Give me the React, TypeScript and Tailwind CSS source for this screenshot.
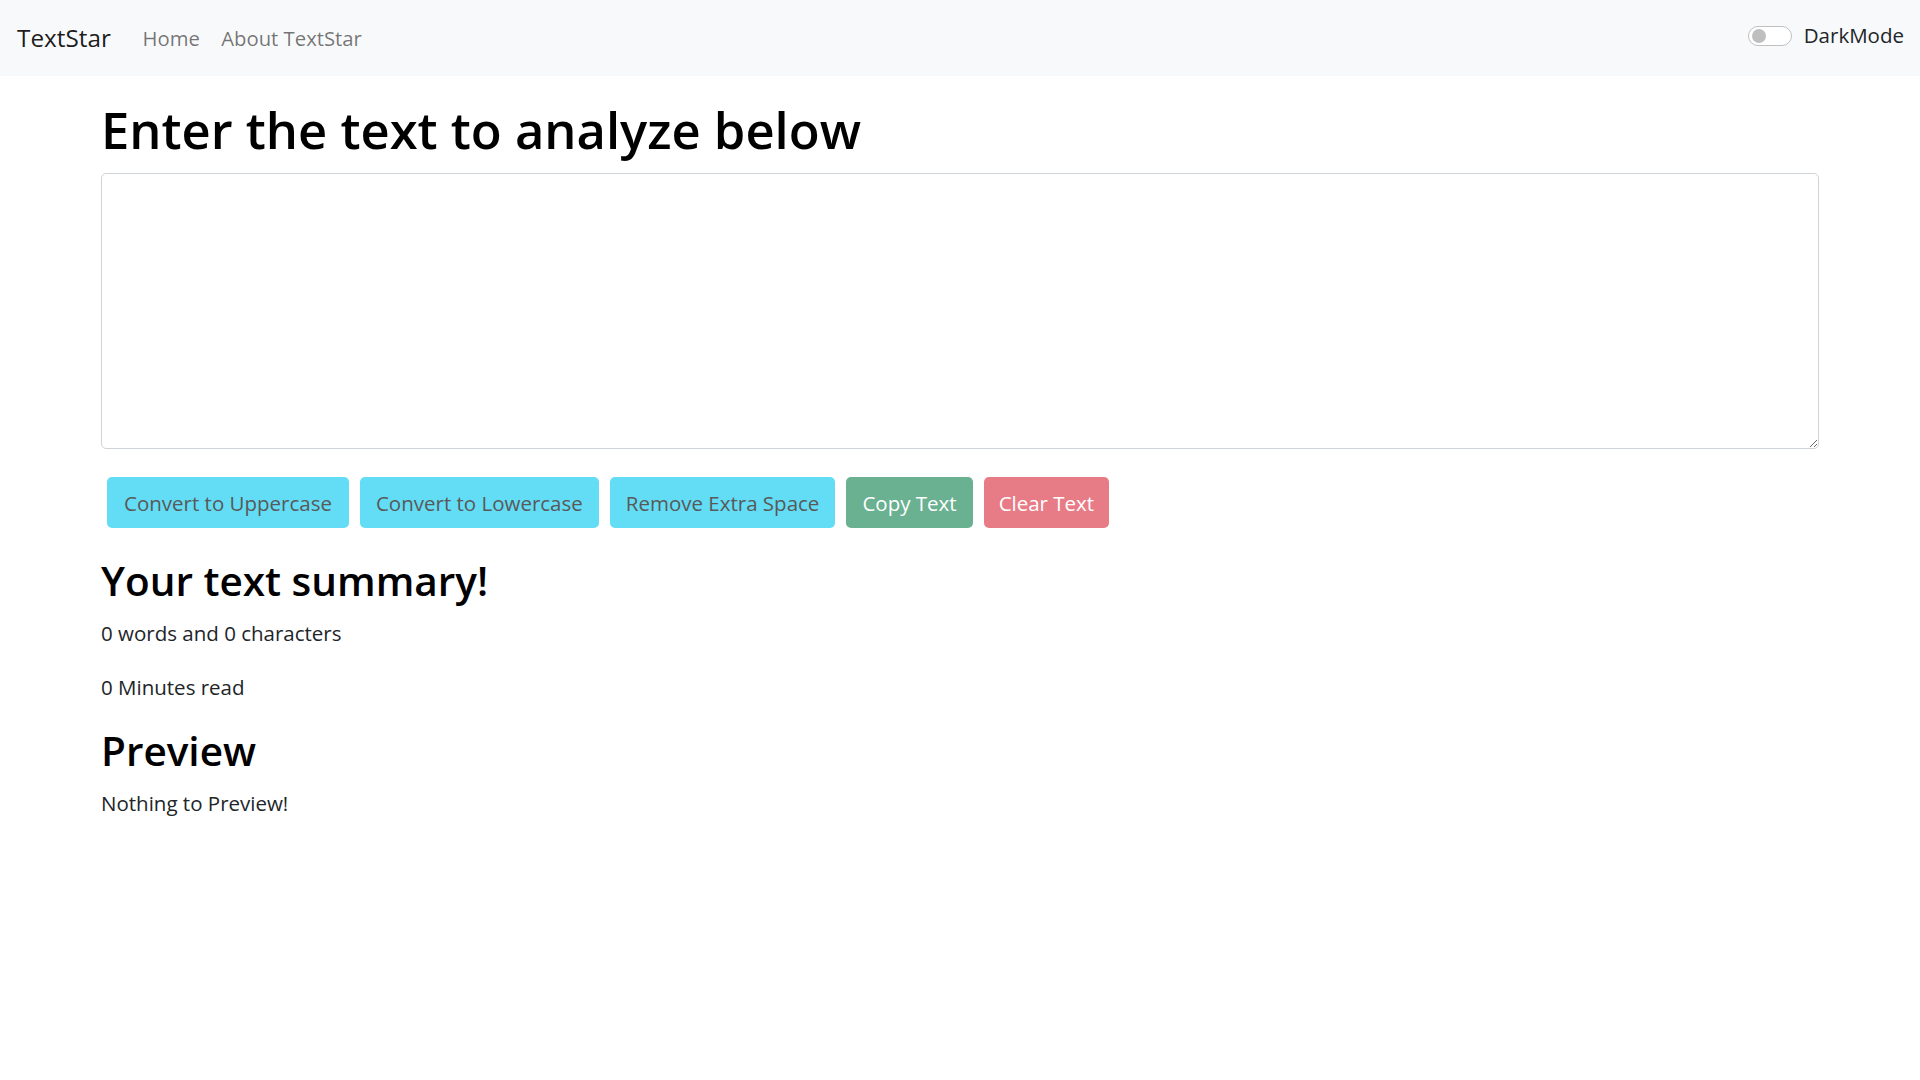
import { useState } from 'react';

const font = { fontFamily: '"Open Sans", "Noto Sans", sans-serif' };

export default function App() {
  const [text, setText] = useState('');
  const words = text.split(/\s+/).filter((w) => w.length > 0).length;
  const empty = text.length === 0;

  return (
    <div className="min-h-screen bg-white text-[#212529]" style={font}>
      {/* navbar */}
      <nav className="h-[76px] bg-[#f8f9fa] flex items-center pl-[17px] pr-[16px]">
        <a className="text-[24.3px] text-black/90 mr-[21px] leading-none">TextStar</a>
        <ul className="flex items-center text-[20.3px] text-black/55">
          <li className="px-[10.7px]">Home</li>
          <li className="px-[10.7px]">About TextStar</li>
        </ul>
        <div className="ml-auto flex items-center gap-[12px] -mt-[5px]">
          <div className="w-[44px] h-[20px] rounded-full border border-[#bfbfbf] bg-white flex items-center pl-[3px]">
            <div className="w-[14px] h-[14px] rounded-full bg-[#bfbfbf]" />
          </div>
          <span className="text-[20.5px]">DarkMode</span>
        </div>
      </nav>

      {/* form */}
      <div className="mx-[101px] mt-[22px]">
        <h1 className="text-[50.7px] font-semibold leading-[1.25] mb-[12px] text-black">
          Enter the text to analyze below
        </h1>
        <textarea
          value={text}
          onChange={(e) => setText(e.target.value)}
          className="block w-full h-[276px] border border-[#ced4da] rounded-[5px] px-[16px] py-[8px] text-[20.5px] outline-none"
        />
        <div className="flex gap-[11px] mt-[28px] pl-[6px]">
          <button disabled={empty} className="h-[51px] px-[17px] rounded-[5px] bg-[#62ddf5] text-[20.5px] text-[#595959]">
            Convert to Uppercase
          </button>
          <button disabled={empty} className="h-[51px] px-[16px] rounded-[5px] bg-[#62ddf5] text-[20.5px] text-[#595959]">
            Convert to Lowercase
          </button>
          <button disabled={empty} className="h-[51px] px-[16px] rounded-[5px] bg-[#62ddf5] text-[20.5px] text-[#595959]">
            Remove Extra Space
          </button>
          <button disabled={empty} className="h-[51px] px-[16px] rounded-[5px] bg-[#69b190] text-[20.5px] text-white">
            Copy Text
          </button>
          <button disabled={empty} className="h-[51px] px-[15px] rounded-[5px] bg-[#e87c86] text-[20.5px] text-white">
            Clear Text
          </button>
        </div>
      </div>

      {/* summary */}
      <div className="mx-[101px] mt-[28px] text-[20.5px] leading-[1.55]">
        <h2 className="text-[40.5px] font-semibold leading-[1.25] mb-[11px] text-black">Your text summary!</h2>
        <p className="mb-[22px]">
          {words} words and {text.length} characters
        </p>
        <p className="mb-[22px]">{0.008 * words} Minutes read</p>
        <h2 className="text-[40.5px] font-semibold leading-[1.25] mb-[12px] text-black">Preview</h2>
        <p>{empty ? 'Nothing to Preview!' : text}</p>
      </div>
    </div>
  );
}
